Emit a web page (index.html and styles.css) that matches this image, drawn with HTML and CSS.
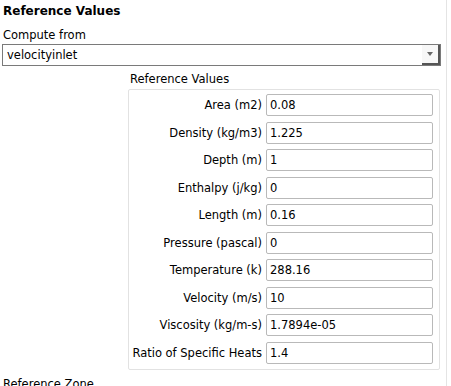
FILE: index.html
```html
<!DOCTYPE html>
<html lang="en">
<head>
    <meta charset="UTF-8">
    <title>Reference Values</title>
    <link rel="stylesheet" href="styles.css">
</head>
<body>
    <div class="panel">
        <h2 class="title">Reference Values</h2>
        <div class="field-label">Compute from</div>
        <div class="select">
            <span class="select-text">velocityinlet</span>
            <span class="select-btn"><span class="arrow"></span></span>
        </div>

        <div class="group-wrap">
            <div class="group-label">Reference Values</div>
            <div class="group">
                <label>Area (m2)</label><div class="input">0.08</div>
                <label>Density (kg/m3)</label><div class="input">1.225</div>
                <label>Depth (m)</label><div class="input">1</div>
                <label>Enthalpy (j/kg)</label><div class="input">0</div>
                <label>Length (m)</label><div class="input">0.16</div>
                <label>Pressure (pascal)</label><div class="input">0</div>
                <label>Temperature (k)</label><div class="input">288.16</div>
                <label>Velocity (m/s)</label><div class="input">10</div>
                <label>Viscosity (kg/m-s)</label><div class="input">1.7894e-05</div>
                <label>Ratio of Specific Heats</label><div class="input">1.4</div>
            </div>
        </div>

        <div class="field-label zone">Reference Zone</div>
    </div>
</body>
</html>
```

FILE: styles.css
```css
body {
    margin: 0;
    background: #fff;
    font-family: 'DejaVu Sans', Verdana, sans-serif;
    font-size: 11.5px;
    color: #000;
    overflow: hidden;
}

.panel {
    width: 447px;
    height: 386px;
    border-right: 1px solid #e4e4e4;
    box-sizing: border-box;
}

.title {
    margin: 0;
    padding: 3px 0 0 3px;
    font-size: 12px;
    font-weight: bold;
    line-height: 16px;
}

.field-label {
    padding: 9px 0 0 3px;
    line-height: 14px;
}

.select {
    display: flex;
    margin: 2px 0 0 2px;
    width: 439px;
    height: 22px;
    border: 1px solid #7a7a7a;
    box-sizing: border-box;
    background: #fff;
}

.select-text {
    flex: 1;
    padding-left: 4px;
    line-height: 20px;
}

.select-btn {
    width: 16px;
    display: flex;
    align-items: center;
    justify-content: center;
    border-right: 2px solid #555;
    border-bottom: 2px solid #555;
    background: #f7f7f7;
}

.arrow {
    width: 0;
    height: 0;
    border-left: 3px solid transparent;
    border-right: 3px solid transparent;
    border-top: 4px solid #666;
}

.group-wrap {
    margin: 4px 0 0 128px;
    width: 312px;
}

.group-label {
    padding-left: 2px;
    line-height: 18px;
}

.group {
    margin-top: 1px;
    border: 1px solid #e2e2e2;
    border-radius: 2px;
    padding: 4px 6px 5px 0;
    display: grid;
    grid-template-columns: 1fr 167px;
    column-gap: 4px;
    row-gap: 5.5px;
    align-items: center;
}

.group label {
    text-align: right;
    white-space: nowrap;
}

.input {
    height: 22px;
    line-height: 20px;
    border: 1px solid #b9b9b9;
    border-radius: 2px;
    box-sizing: border-box;
    padding-left: 3px;
    background: #fff;
}

.zone {
    padding-top: 7px;
}
```
